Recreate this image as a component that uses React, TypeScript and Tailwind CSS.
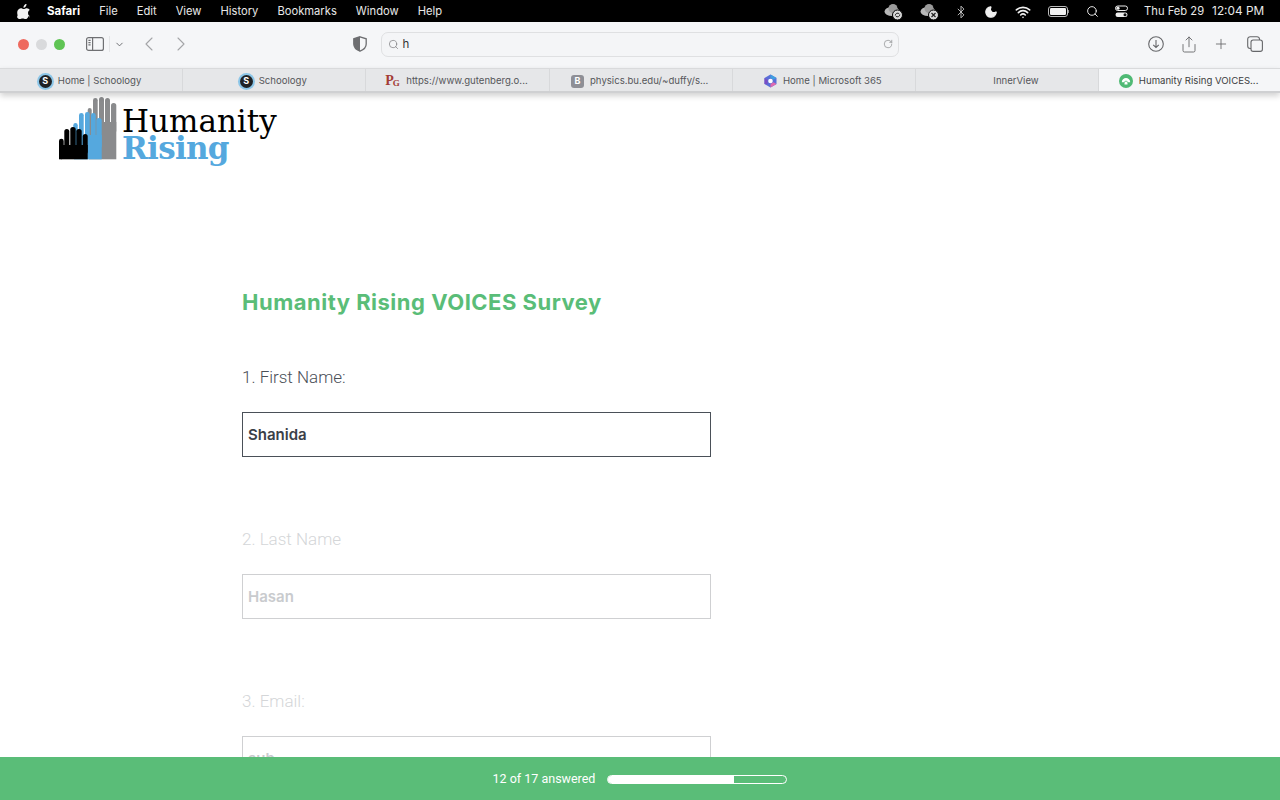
import React from 'react';
import { ChevronDown, ChevronLeft, ChevronRight, Plus, RotateCw, Search, Share, Bluetooth, Wifi, Moon } from 'lucide-react';

const menuItems = ['File', 'Edit', 'View', 'History', 'Bookmarks', 'Window', 'Help'];

const AppleLogo = () => (
  <svg width="13" height="15" viewBox="0 0 170 200" fill="#f2f2f2">
    <path d="M150 155c-4 9-8 17-13 24-7 10-13 17-17 21-7 6-14 9-22 9-6 0-13-2-21-5-8-3-15-5-22-5-7 0-15 2-23 5-8 3-15 5-20 5-8 0-15-3-23-10-5-4-11-12-18-22C-16 166-21 152-24 136c-3-16-1-30 5-42 5-9 12-16 20-22 9-5 18-8 29-8 6 0 14 2 23 5 9 4 15 5 18 5 2 0 9-2 20-6 10-4 19-5 26-5 19 2 34 9 43 24-17 10-26 25-25 43 0 15 6 27 16 37 5 4 10 8 16 10-1 4-3 8-4 11zM113 7c0 11-4 22-12 32-10 11-22 18-34 17 0-1 0-3 0-4 0-11 5-22 12-31 4-4 9-8 15-11 6-3 12-5 17-5 1 1 1 2 2 2z" transform="translate(24 -6) scale(.9 1)" />
  </svg>
);

const CloudBadge = ({ cross }: { cross?: boolean }) => (
  <svg width="22" height="18" viewBox="0 0 22 18">
    <ellipse cx="9" cy="8.5" rx="7.5" ry="4.5" fill="#b8b8b8" />
    <circle cx="10" cy="5.5" r="4.5" fill="#9a9a9a" />
    <circle cx="14.5" cy="12" r="5" fill="#d8d8d8" stroke="#000" strokeWidth="1" />
    {cross ? (
      <path d="M12.5 10l4 4M16.5 10l-4 4" stroke="#222" strokeWidth="1.2" />
    ) : (
      <path d="M12.3 12.5a2.3 2.3 0 0 1 4-1.6M16.8 11.5a2.3 2.3 0 0 1-4 1.6" stroke="#222" strokeWidth="1" fill="none" />
    )}
  </svg>
);

const MenuBar = () => (
  <div className="h-[22px] shrink-0 bg-black flex items-center text-[#e8e8e8] text-[11.2px] font-['Inter',sans-serif] pl-[17px] pt-[1px]">
    <AppleLogo />
    <span className="ml-[17px] font-bold text-white text-[11.5px]">Safari</span>
    <div className="ml-[19px] flex gap-[19px]">
      {menuItems.map(m => <span key={m}>{m}</span>)}
    </div>
    <div className="ml-[441px] flex items-center">
      <CloudBadge />
      <span className="ml-[14px] flex"><CloudBadge cross /></span>
      <Bluetooth className="ml-[13px] w-[14px] h-[14px]" strokeWidth={1.5} color="#cfcfcf" />
      <Moon className="ml-[16px] w-[14px] h-[14px]" fill="#f0f0f0" color="#f0f0f0" />
      <Wifi className="ml-[17px] w-[16px] h-[16px]" strokeWidth={2.4} color="#f0f0f0" />
      <svg className="ml-[17px]" width="22" height="11" viewBox="0 0 22 11">
        <rect x=".5" y=".5" width="19" height="10" rx="2.5" fill="none" stroke="#bbb" />
        <rect x="2" y="2" width="16" height="7" rx="1.2" fill="#f2f2f2" />
        <path d="M20.5 4v3" stroke="#888" strokeWidth="1" />
      </svg>
      <Search className="ml-[16px] w-[13px] h-[13px]" strokeWidth={1.8} color="#e8e8e8" />
      <svg className="ml-[16px]" width="13" height="13" viewBox="0 0 13 13">
        <rect x=".5" y="1" width="12" height="4.5" rx="2.2" fill="none" stroke="#eee" />
        <circle cx="3" cy="3.2" r="1.6" fill="#eee" />
        <rect x=".5" y="7.5" width="12" height="4.5" rx="2.2" fill="#eee" />
        <circle cx="10" cy="9.7" r="1.5" fill="#111" />
      </svg>
      <span className="ml-[16px]">Thu Feb 29</span>
      <span className="ml-[8px] text-[11.8px]">12:04 PM</span>
    </div>
  </div>
);

const Toolbar = () => (
  <div className="h-[46px] shrink-0 bg-[#f5f6f8] flex items-center pl-[18px] pr-[17px] pb-[2px]">
    <div className="flex gap-[7px]">
      <span className="w-[11px] h-[11px] rounded-full bg-[#ee6a5f]" />
      <span className="w-[11px] h-[11px] rounded-full bg-[#d9dadc]" />
      <span className="w-[11px] h-[11px] rounded-full bg-[#5fc454]" />
    </div>
    <svg className="ml-[21px]" width="18" height="14" viewBox="0 0 18 14" fill="none" stroke="#6f7073" strokeWidth="1.2">
      <rect x=".6" y=".6" width="16.8" height="12.8" rx="2" />
      <path d="M6.6.6v12.8M2.4 3.4h2.2M2.4 5.6h2.2M2.4 7.8h2.2" />
    </svg>
    <span className="ml-[5px] w-px h-[16px] bg-[#e4e5e7]" />
    <ChevronDown className="ml-[4px] w-[11px] h-[11px]" strokeWidth={2} color="#66676a" />
    <ChevronLeft className="ml-[11.5px] w-[24px] h-[24px]" strokeWidth={1.1} color="#a4a5a8" />
    <ChevronRight className="ml-[8px] w-[24px] h-[24px]" strokeWidth={1.1} color="#a4a5a8" />
    <svg className="ml-[160px]" width="14" height="16" viewBox="0 0 14 16">
      <path d="M7 .8 13.2 2.8V8c0 3.4-2.6 5.8-6.2 7.2C3.4 13.8.8 11.4.8 8V2.8z" fill="#f5f6f8" stroke="#6d6e71" strokeWidth="1.3" />
      <path d="M7 .8 .8 2.8V8c0 3.4 2.6 5.8 6.2 7.2z" fill="#6d6e71" />
    </svg>
    <div className="ml-[14px] w-[518px] h-[25px] rounded-[7px] border border-[#dfe0e2] bg-[#f4f5f7] flex items-center pl-[6px] pr-[5px]">
      <Search className="w-[11px] h-[11px]" strokeWidth={1.5} color="#77787b" />
      <span className="ml-[4px] pt-[2px] text-[11.5px] text-[#333] font-['Inter',sans-serif]">h</span>
      <RotateCw className="ml-auto w-[10px] h-[10px]" strokeWidth={1.4} color="#77787b" />
    </div>
    <div className="ml-auto flex items-center text-[#66676a]">
      <svg width="16" height="16" viewBox="0 0 16 16" fill="none" stroke="#66676a" strokeWidth="1.1">
        <circle cx="8" cy="8" r="7.3" />
        <path d="M8 4v7.5M5.2 8.8 8 11.5l2.8-2.7" />
      </svg>
      <Share className="ml-[16.5px] w-[18px] h-[19px]" strokeWidth={1.2} />
      <Plus className="ml-[15px] w-[16px] h-[16px]" strokeWidth={1.3} />
      <svg className="ml-[18px]" width="16" height="16" viewBox="0 0 16 16" fill="none" stroke="#66676a" strokeWidth="1.1">
        <rect x="4" y="4" width="11.4" height="11.4" rx="2.2" />
        <path d="M4 12.5h-.8A2.5 2.5 0 0 1 .7 10V3.2A2.5 2.5 0 0 1 3.2.7H10a2.5 2.5 0 0 1 2.5 2.5V4" />
      </svg>
    </div>
  </div>
);

const SchoologyIcon = () => (
  <span className="w-[13px] h-[13px] rounded-full bg-[#1f2226] ring-2 ring-[#8cc6e8] flex items-center justify-center text-white text-[9px] font-bold font-['Inter',sans-serif]">S</span>
);

const tabs: { title: string; icon?: React.ReactNode; active?: boolean }[] = [
  { title: 'Home | Schoology', icon: <SchoologyIcon /> },
  { title: 'Schoology', icon: <SchoologyIcon /> },
  {
    title: 'https://www.gutenberg.o...',
    icon: (
      <span className="flex items-start w-[15px] h-[15px] text-[#a33c36] font-bold font-['Liberation_Serif',serif] leading-none">
        <span className="text-[14px]">P</span>
        <span className="text-[9px] mt-[5px] -ml-[1px]">G</span>
      </span>
    ),
  },
  { title: 'physics.bu.edu/~duffy/s...', icon: <span className="w-[13px] h-[13px] rounded-[3px] bg-[#8e8f96] flex items-center justify-center text-white text-[9px] font-bold">B</span> },
  {
    title: 'Home | Microsoft 365',
    icon: (
      <svg width="13" height="14" viewBox="0 0 13 14">
        <path d="M6.5.5 12.5 4v6l-6 3.5L.5 10V4z" fill="#5a6fd8" />
        <path d="M6.5.5 12.5 4l-3 1.7-3-1.7z" fill="#3f9fe0" />
        <path d="M.5 10V4l3 1.7v4.6z" fill="#7a4fc4" />
        <path d="M6.5 13.5 12.5 10 9.5 8.3 6.5 10z" fill="#e06ab0" />
        <circle cx="6.5" cy="7" r="2.3" fill="#fff" />
      </svg>
    ),
  },
  { title: 'InnerView', icon: <span className="w-[14px] h-[14px]" /> },
  {
    title: 'Humanity Rising VOICES...',
    active: true,
    icon: (
      <svg width="14" height="14" viewBox="0 0 14 14">
        <circle cx="7" cy="7" r="7" fill="#4fb974" />
        <path d="M2.8 8.3a4.2 4.2 0 0 1 8.4 0H9.3L7 6.5 4.7 8.3zM5.5 8.5 7 7.3l1.5 1.2v2h-3z" fill="#fff" />
      </svg>
    ),
  },
];

const TabStrip = () => (
  <div className="relative z-10 h-[25px] shrink-0 flex bg-[#e6e7e9] border-t border-[#d9dadc] border-b-2 border-b-[#cfd0d2] shadow-[0_3px_6px_rgba(0,0,0,0.18)] font-['Inter',sans-serif] text-[9.6px] text-[#55565a]">
    {tabs.map(t => (
      <div
        key={t.title}
        className={`w-[183.2px] last:w-[181px] shrink-0 pt-[2px] pr-[2px] flex items-center justify-center gap-[6px] border-r border-[#d8d9db] last:border-r-0 ${t.active ? 'bg-[#f5f6f8] text-[#3c3d40]' : ''}`}
      >
        {t.icon}
        <span>{t.title}</span>
      </div>
    ))}
  </div>
);

const HandsLogo = () => (
  <svg width="58" height="63" viewBox="0 0 58 63" className="shrink-0">
    <g fill="#8a8b8d">
      <rect x="28.7" y="11" width="4" height="30" rx="2" />
      <rect x="34" y="1" width="4.7" height="30" rx="2.3" />
      <rect x="40" y="0" width="5" height="30" rx="2.5" />
      <rect x="46" y="1" width="5" height="30" rx="2.5" />
      <rect x="52" y="6" width="5.3" height="30" rx="2.6" />
      <rect x="30" y="25" width="27.3" height="37.3" />
    </g>
    <g fill="#55a8de">
      <rect x="14.3" y="26" width="4.4" height="30" rx="2.2" />
      <rect x="20" y="16" width="4.7" height="30" rx="2.3" />
      <rect x="26" y="15" width="4.7" height="30" rx="2.3" />
      <rect x="32" y="16" width="4.7" height="30" rx="2.3" />
      <rect x="37.3" y="21" width="5.4" height="30" rx="2.6" />
      <rect x="15" y="38" width="27.7" height="24.3" />
    </g>
    <g fill="#000">
      <rect x="0" y="41.7" width="4.7" height="20.6" rx="2.3" />
      <rect x="5.3" y="32" width="5" height="25" rx="2.5" />
      <rect x="11.3" y="30" width="5.4" height="25" rx="2.6" />
      <rect x="17.3" y="32" width="5.4" height="25" rx="2.6" />
      <rect x="23.7" y="37" width="5" height="20" rx="2.5" />
      <rect x="0" y="48" width="28.7" height="14.3" />
    </g>
  </svg>
);

const Logo = () => (
  <div className="flex items-start pl-[59px] pt-[4px] h-[112px]">
    <HandsLogo />
    <div className="ml-[5px] flex flex-col font-['DejaVu_Serif',serif]">
      <span className="mt-[10px] text-[31px] leading-[28px] text-black">Humanity</span>
      <span className="text-[31px] leading-[26px] font-bold text-[#55a8de] tracking-[-0.7px]">Rising</span>
    </div>
  </div>
);

const Question = ({ label, value, faded }: { label: string; value: string; faded?: boolean }) => (
  <div>
    <div className={`text-[17px] leading-[24px] font-light font-['Roboto',sans-serif] ${faded ? 'text-[#d4d6d8]' : 'text-[#4a4f57]'}`}>{label}</div>
    <div className={`mt-[23px] w-[469px] h-[45px] border flex items-center pl-[5px] pt-[2px] bg-white text-[15px] font-semibold font-['Inter',sans-serif] ${faded ? 'border-[#cfd0d2] text-[#c9cbce]' : 'border-[#4a5058] text-[#3b4048]'}`}>
      {value}
    </div>
  </div>
);

const Footer = () => (
  <div className="h-[43px] shrink-0 relative z-10 bg-[#5abd78] flex items-center justify-center pt-[1px] text-white text-[12.5px] font-['Roboto',sans-serif]">
    <span>12 of 17 answered</span>
    <div className="ml-[12px] w-[180px] h-[9px] rounded-full border border-white overflow-hidden">
      <div className="h-full w-[70.5%] bg-white" />
    </div>
  </div>
);

export default function App() {
  return (
    <div className="h-screen flex flex-col overflow-hidden bg-white">
      <MenuBar />
      <Toolbar />
      <TabStrip />
      <main className="flex-1 min-h-0 overflow-hidden">
        <Logo />
        <div className="pl-[242px] pt-[81px]">
          <h1 className="text-[22px] leading-[32px] font-bold text-[#5abd78] tracking-[0.5px] font-['Inter',sans-serif]">Humanity Rising VOICES Survey</h1>
          <div className="mt-[47px] flex flex-col gap-[70px]">
            <Question label="1. First Name:" value="Shanida" />
            <Question label="2. Last Name" value="Hasan" faded />
            <Question label="3. Email:" value="sub" faded />
          </div>
        </div>
      </main>
      <Footer />
    </div>
  );
}
